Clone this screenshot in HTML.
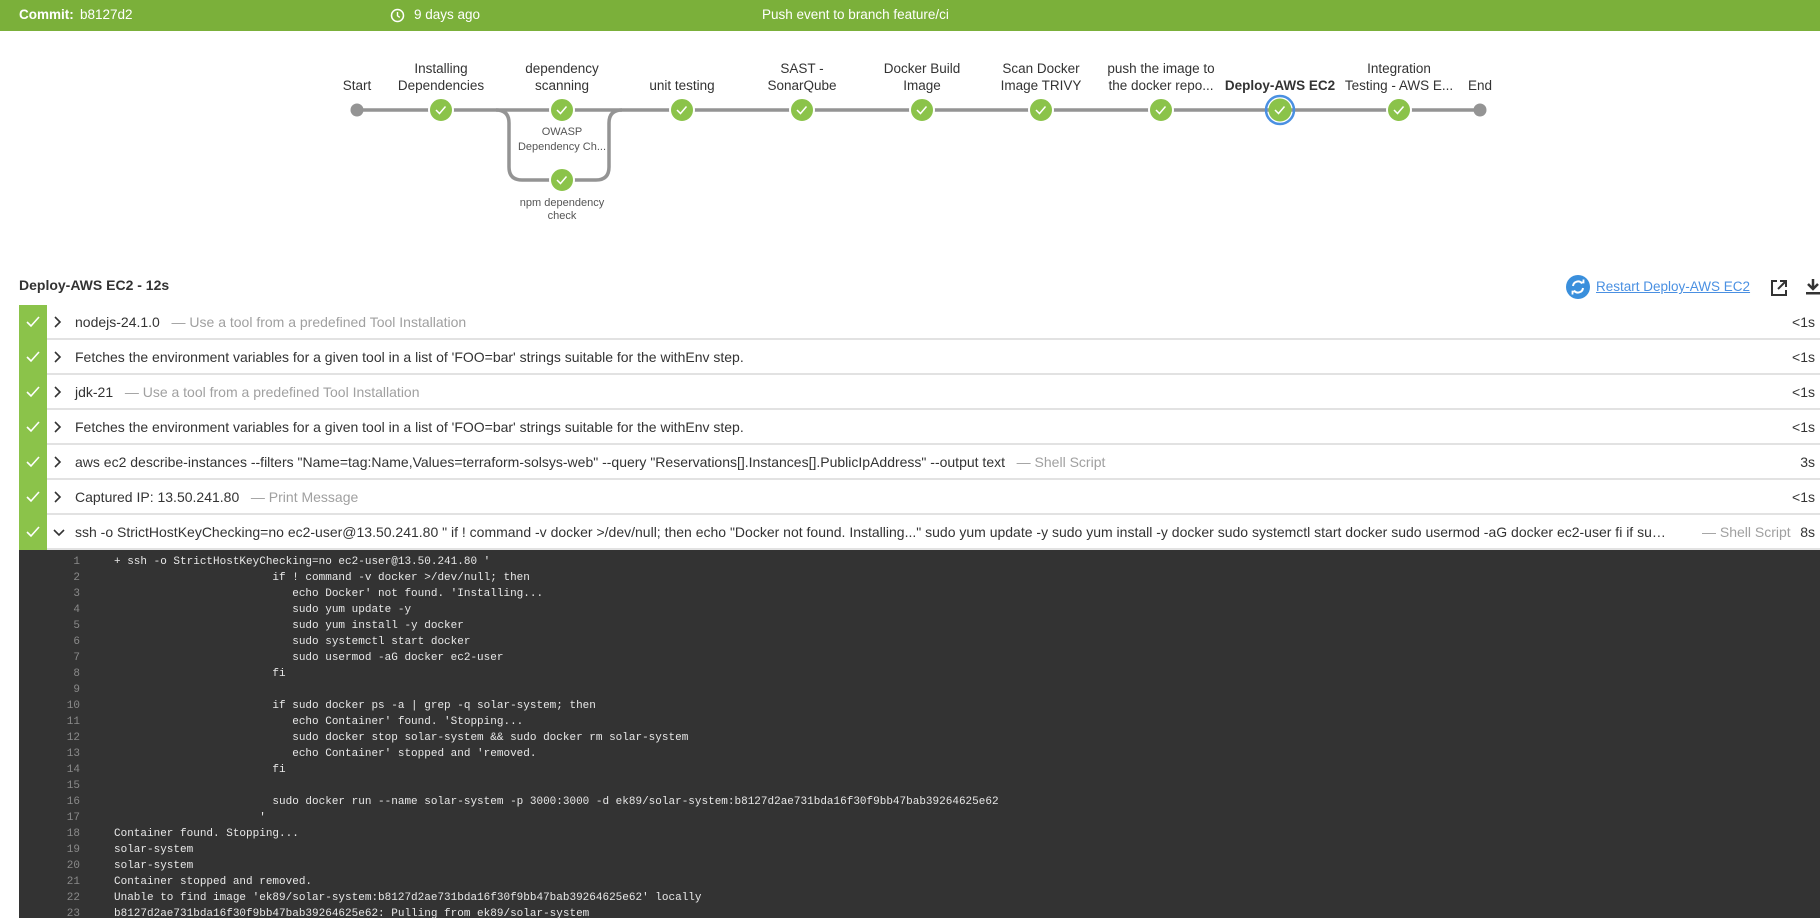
<!DOCTYPE html>
<html><head><meta charset="utf-8"><style>
*{margin:0;padding:0;box-sizing:border-box}
body{width:1820px;height:918px;overflow:hidden;background:#fff;font-family:"Liberation Sans",sans-serif;color:#333;position:relative}
.hdr{position:absolute;left:0;top:0;width:1820px;height:31px;background:#7bb03a;color:#fff;font-size:13.5px}
.hdr span{position:absolute;top:7px}
.title{position:absolute;left:19px;top:277px;font-size:14px;font-weight:bold;color:#333}
.row{position:absolute;left:19px;width:1801px;height:35px;border-bottom:2px solid #e2e2e2;background:#fff}
.row .ok{position:absolute;left:0;top:0;width:28px;height:35px;background:#8bc34a}
.row .ok svg{position:absolute;left:7px;top:11px}
.row .chev{position:absolute;left:34px;top:11px}
.row .t{position:absolute;left:56px;top:9px;font-size:14px;color:#333;white-space:nowrap}
.row .t i{font-style:normal;color:#a0a0a0}
.row .d{position:absolute;right:5px;top:9px;font-size:14px;color:#333}
.code{position:absolute;left:19px;top:550px;width:1801px;height:368px;background:#333}
.code pre{position:absolute;top:4px;font-family:"Liberation Mono",monospace;font-size:11px;line-height:16px;color:#e8e8e8}
.ln{left:0;width:61px;text-align:right;color:#8a8a8a!important}
.tx{left:95px}
</style></head><body>
<div class="hdr">
<span style="left:19px;font-weight:bold">Commit:</span>
<span style="left:80px">b8127d2</span>
<svg style="position:absolute;left:390px;top:8px" width="15" height="15" viewBox="0 0 15 15"><circle cx="7.5" cy="7.5" r="6" fill="none" stroke="#fff" stroke-width="1.5"/><path d="M7.5 4v3.8l2.3 1.6" fill="none" stroke="#fff" stroke-width="1.4"/></svg>
<span style="left:414px">9 days ago</span>
<span style="left:762px">Push event to branch feature/ci</span>
</div>

<svg style="position:absolute;left:0;top:0" width="1820" height="240">
<g stroke="#949494" stroke-width="3.5" fill="none">
<line x1="357" y1="110" x2="1480" y2="110"/>
<path d="M496,110 Q509,110 509,123 L509,167 Q509,180 522,180 L596,180 Q609,180 609,167 L609,123 Q609,110 622,110"/>
</g>
<circle cx="357" cy="110" r="6.5" fill="#949494"/>
<circle cx="1480" cy="110" r="6.5" fill="#949494"/>
<g fill="#8bc34a" stroke="#fff" stroke-width="2">
<circle cx="441" cy="110" r="12"/><circle cx="562" cy="110" r="12"/><circle cx="562" cy="180" r="12"/><circle cx="682" cy="110" r="12"/><circle cx="802" cy="110" r="12"/><circle cx="922" cy="110" r="12"/><circle cx="1041" cy="110" r="12"/><circle cx="1161" cy="110" r="12"/><circle cx="1399" cy="110" r="12"/>
</g>
<circle cx="1280" cy="110" r="14" fill="none" stroke="#4a90e2" stroke-width="2.5"/>
<circle cx="1280" cy="110" r="11.5" fill="#8bc34a"/>
<g fill="none" stroke="#fff" stroke-width="1.5">
<path d="M436,110 l3.5,3.5 l6,-7"/><path d="M557,110 l3.5,3.5 l6,-7"/><path d="M557,180 l3.5,3.5 l6,-7"/><path d="M677,110 l3.5,3.5 l6,-7"/><path d="M797,110 l3.5,3.5 l6,-7"/><path d="M917,110 l3.5,3.5 l6,-7"/><path d="M1036,110 l3.5,3.5 l6,-7"/><path d="M1156,110 l3.5,3.5 l6,-7"/><path d="M1275,110 l3.5,3.5 l6,-7"/><path d="M1394,110 l3.5,3.5 l6,-7"/>
</g>
<g font-family="Liberation Sans,sans-serif" font-size="13.5" fill="#333" text-anchor="middle">
<text x="357" y="90">Start</text>
<text x="441" y="73">Installing</text><text x="441" y="90">Dependencies</text>
<text x="562" y="73">dependency</text><text x="562" y="90">scanning</text>
<text x="682" y="90">unit testing</text>
<text x="802" y="73">SAST -</text><text x="802" y="90">SonarQube</text>
<text x="922" y="73">Docker Build</text><text x="922" y="90">Image</text>
<text x="1041" y="73">Scan Docker</text><text x="1041" y="90">Image TRIVY</text>
<text x="1161" y="73">push the image to</text><text x="1161" y="90">the docker repo...</text>
<text x="1280" y="90" font-weight="bold">Deploy-AWS EC2</text>
<text x="1399" y="73">Integration</text><text x="1399" y="90">Testing - AWS E...</text>
<text x="1480" y="90">End</text>
</g>
<g font-family="Liberation Sans,sans-serif" font-size="11" fill="#555" text-anchor="middle">
<text x="562" y="135">OWASP</text><text x="562" y="150">Dependency Ch...</text>
<text x="562" y="206">npm dependency</text><text x="562" y="219">check</text>
</g>
</svg>

<div class="title">Deploy-AWS EC2 - 12s</div>
<svg style="position:absolute;left:1566px;top:275px" width="24" height="24" viewBox="0 0 24 24"><circle cx="12" cy="12" r="12" fill="#3a8fdc"/><path d="M7 11a5 5 0 0 1 9-2.5M17 13a5 5 0 0 1-9 2.5" fill="none" stroke="#fff" stroke-width="2"/><path d="M14.5 7.5h3v-3M9.5 16.5h-3v3" fill="none" stroke="#fff" stroke-width="1.8"/></svg>
<div style="position:absolute;left:1596px;top:279px;font-size:13.5px;color:#4a90e2;text-decoration:underline">Restart Deploy-AWS EC2</div>
<svg style="position:absolute;left:1770px;top:279px" width="18" height="18" viewBox="0 0 18 18"><path d="M7 2H2v14h14v-5" fill="none" stroke="#333" stroke-width="2"/><path d="M10 2h6v6M16 2L8 10" fill="none" stroke="#333" stroke-width="2"/></svg>
<svg style="position:absolute;left:1804px;top:278px" width="16" height="18" viewBox="0 0 16 18"><path d="M9 1v9M4 6l5 5 5-5" fill="none" stroke="#333" stroke-width="2.5"/><rect x="2" y="14" width="14" height="2.5" fill="#333"/></svg>

<div class="row" style="top:305px"><div class="ok"><svg width="14" height="12"><path d="M1 6l4 4 8-9" fill="none" stroke="#fff" stroke-width="1.6"/></svg></div><svg class="chev" width="10" height="12"><path d="M2 1l5 5-5 5" fill="none" stroke="#333" stroke-width="1.6"/></svg><div class="t">nodejs-24.1.0 &nbsp; <i>— Use a tool from a predefined Tool Installation</i></div><div class="d">&lt;1s</div></div>
<div class="row" style="top:340px"><div class="ok"><svg width="14" height="12"><path d="M1 6l4 4 8-9" fill="none" stroke="#fff" stroke-width="1.6"/></svg></div><svg class="chev" width="10" height="12"><path d="M2 1l5 5-5 5" fill="none" stroke="#333" stroke-width="1.6"/></svg><div class="t">Fetches the environment variables for a given tool in a list of 'FOO=bar' strings suitable for the withEnv step.</div><div class="d">&lt;1s</div></div>
<div class="row" style="top:375px"><div class="ok"><svg width="14" height="12"><path d="M1 6l4 4 8-9" fill="none" stroke="#fff" stroke-width="1.6"/></svg></div><svg class="chev" width="10" height="12"><path d="M2 1l5 5-5 5" fill="none" stroke="#333" stroke-width="1.6"/></svg><div class="t">jdk-21 &nbsp; <i>— Use a tool from a predefined Tool Installation</i></div><div class="d">&lt;1s</div></div>
<div class="row" style="top:410px"><div class="ok"><svg width="14" height="12"><path d="M1 6l4 4 8-9" fill="none" stroke="#fff" stroke-width="1.6"/></svg></div><svg class="chev" width="10" height="12"><path d="M2 1l5 5-5 5" fill="none" stroke="#333" stroke-width="1.6"/></svg><div class="t">Fetches the environment variables for a given tool in a list of 'FOO=bar' strings suitable for the withEnv step.</div><div class="d">&lt;1s</div></div>
<div class="row" style="top:445px"><div class="ok"><svg width="14" height="12"><path d="M1 6l4 4 8-9" fill="none" stroke="#fff" stroke-width="1.6"/></svg></div><svg class="chev" width="10" height="12"><path d="M2 1l5 5-5 5" fill="none" stroke="#333" stroke-width="1.6"/></svg><div class="t">aws ec2 describe-instances --filters "Name=tag:Name,Values=terraform-solsys-web" --query "Reservations[].Instances[].PublicIpAddress" --output text &nbsp; <i>— Shell Script</i></div><div class="d">3s</div></div>
<div class="row" style="top:480px"><div class="ok"><svg width="14" height="12"><path d="M1 6l4 4 8-9" fill="none" stroke="#fff" stroke-width="1.6"/></svg></div><svg class="chev" width="10" height="12"><path d="M2 1l5 5-5 5" fill="none" stroke="#333" stroke-width="1.6"/></svg><div class="t">Captured IP: 13.50.241.80 &nbsp; <i>— Print Message</i></div><div class="d">&lt;1s</div></div>
<div class="row" style="top:515px"><div class="ok"><svg width="14" height="12"><path d="M1 6l4 4 8-9" fill="none" stroke="#fff" stroke-width="1.6"/></svg></div><svg class="chev" width="12" height="10" style="top:13px"><path d="M1 2l5 5 5-5" fill="none" stroke="#333" stroke-width="1.6"/></svg><div class="t" style="width:1593px;overflow:hidden;text-overflow:ellipsis">ssh -o StrictHostKeyChecking=no ec2-user@13.50.241.80 " if ! command -v docker &gt;/dev/null; then echo "Docker not found. Installing..." sudo yum update -y sudo yum install -y docker sudo systemctl start docker sudo usermod -aG docker ec2-user fi if sudo docker ps -a | grep -q solar-system</div><div class="t" style="left:1683px;color:#a0a0a0">— Shell Script</div><div class="d">8s</div></div>

<div class="code">
<pre class="ln">1
2
3
4
5
6
7
8
9
10
11
12
13
14
15
16
17
18
19
20
21
22
23</pre>
<pre class="tx">+ ssh -o StrictHostKeyChecking=no ec2-user@13.50.241.80 '
                        if ! command -v docker &gt;/dev/null; then
                           echo Docker' not found. 'Installing...
                           sudo yum update -y
                           sudo yum install -y docker
                           sudo systemctl start docker
                           sudo usermod -aG docker ec2-user
                        fi

                        if sudo docker ps -a | grep -q solar-system; then
                           echo Container' found. 'Stopping...
                           sudo docker stop solar-system &amp;&amp; sudo docker rm solar-system
                           echo Container' stopped and 'removed.
                        fi

                        sudo docker run --name solar-system -p 3000:3000 -d ek89/solar-system:b8127d2ae731bda16f30f9bb47bab39264625e62
                      '
Container found. Stopping...
solar-system
solar-system
Container stopped and removed.
Unable to find image 'ek89/solar-system:b8127d2ae731bda16f30f9bb47bab39264625e62' locally
b8127d2ae731bda16f30f9bb47bab39264625e62: Pulling from ek89/solar-system</pre>
</div>
</body></html>
